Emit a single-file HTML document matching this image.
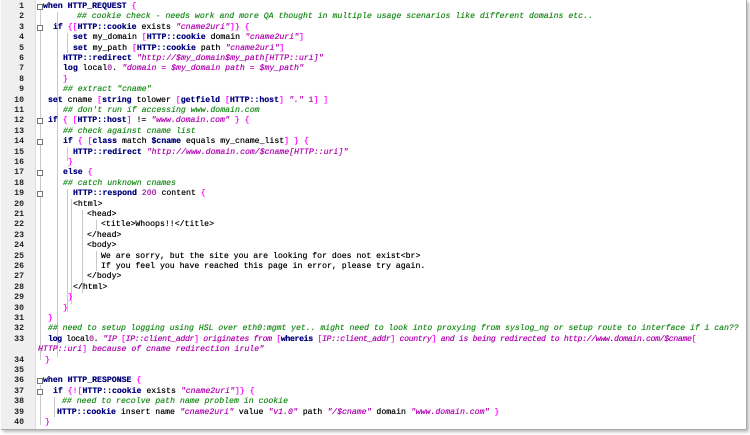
<!DOCTYPE html><html><head><style>
body{margin:0;width:750px;height:435px;background:#fff;overflow:hidden;font-family:"Liberation Mono",monospace;}
#f{position:absolute;left:1px;top:0;width:744px;height:429px;border:1px solid #aaa;border-top:none;box-shadow:2px 2px 3px #bbb;background:#fff}
#g{position:absolute;left:1px;top:0;width:34px;height:429px;background:#efefef;border-right:1px solid #ddd}
.n{position:absolute;width:24px;text-align:right;font-size:8.2px;line-height:10.4px;color:#222;font-weight:bold}
.l{position:absolute;font-size:8.2px;line-height:10.4px;color:#000;white-space:pre;text-shadow:0 0 0.4px currentColor}
.k{color:#00007a;font-weight:bold}.b{color:#f0f}.s{color:#b000b0;font-style:italic}.c{color:#1a8a1a;font-style:italic}.m{color:#a020a0}
.fm{position:absolute;left:37px;width:6px;height:6px;border:1px solid #777;background:#fff;box-sizing:border-box}
.v{position:absolute;width:1px;background:#c8c8c8}
</style></head><body><div id="f"></div><div id="g"></div>
<div class="v" style="left:40px;top:10px;height:350px"></div>
<div class="v" style="left:57px;top:12px;height:345px"></div>
<div class="v" style="left:67px;top:33px;height:20px"></div>
<div class="v" style="left:67px;top:147px;height:14px"></div>
<div class="v" style="left:67px;top:189px;height:123px"></div>
<div class="v" style="left:71px;top:199px;height:105px"></div>
<div class="v" style="left:82px;top:210px;height:83px"></div>
<div class="v" style="left:96px;top:220px;height:10px"></div>
<div class="v" style="left:96px;top:251px;height:20px"></div>
<div class="v" style="left:40px;top:385px;height:40px"></div>
<div class="v" style="left:54px;top:397px;height:20px"></div>
<div class="n" style="top:2px">1</div><div class="n" style="top:12.4px">2</div><div class="n" style="top:22.8px">3</div><div class="n" style="top:33.2px">4</div><div class="n" style="top:43.6px">5</div><div class="n" style="top:54px">6</div><div class="n" style="top:64.4px">7</div><div class="n" style="top:74.8px">8</div><div class="n" style="top:85.2px">9</div><div class="n" style="top:95.6px">10</div><div class="n" style="top:106px">11</div><div class="n" style="top:116.4px">12</div><div class="n" style="top:126.8px">13</div><div class="n" style="top:137.2px">14</div><div class="n" style="top:147.6px">15</div><div class="n" style="top:158px">16</div><div class="n" style="top:168.4px">17</div><div class="n" style="top:178.8px">18</div><div class="n" style="top:189.2px">19</div><div class="n" style="top:199.6px">20</div><div class="n" style="top:210px">21</div><div class="n" style="top:220.4px">22</div><div class="n" style="top:230.8px">23</div><div class="n" style="top:241.2px">24</div><div class="n" style="top:251.6px">25</div><div class="n" style="top:262px">26</div><div class="n" style="top:272.4px">27</div><div class="n" style="top:282.8px">28</div><div class="n" style="top:293.2px">29</div><div class="n" style="top:303.6px">30</div><div class="n" style="top:314px">31</div><div class="n" style="top:324.4px">32</div><div class="n" style="top:334.8px">33</div><div class="n" style="top:355.6px">34</div><div class="n" style="top:366px">35</div><div class="n" style="top:376.4px">36</div><div class="n" style="top:386.8px">37</div><div class="n" style="top:397.2px">38</div><div class="n" style="top:407.6px">39</div><div class="n" style="top:418px">40</div>
<div class="fm" style="top:4px"></div><div class="fm" style="top:25px"></div><div class="fm" style="top:118px"></div><div class="fm" style="top:139px"></div><div class="fm" style="top:170px"></div><div class="fm" style="top:191px"></div><div class="fm" style="top:378px"></div><div class="fm" style="top:389px"></div>
<div class="l" style="top:2px;left:43px"><span class="k">when HTTP_REQUEST</span> <span class="b">{</span></div>
<div class="l" style="top:12.4px;left:77px"><span class="c">## cookie check - needs work and more QA thought in multiple usage scenarios like different domains etc..</span></div>
<div class="l" style="top:22.8px;left:53px"><span class="k">if</span> <span class="b">{[</span><span class="k">HTTP::cookie</span> exists <span class="s">"cname2uri"</span><span class="b">]}</span> <span class="b">{</span></div>
<div class="l" style="top:33.2px;left:73px"><span class="k">set</span> my_domain <span class="b">[</span><span class="k">HTTP::cookie</span> domain <span class="s">"cname2uri"</span><span class="b">]</span></div>
<div class="l" style="top:43.6px;left:73px"><span class="k">set</span> my_path <span class="b">[</span><span class="k">HTTP::cookie</span> path <span class="s">"cname2uri"</span><span class="b">]</span></div>
<div class="l" style="top:54px;left:63px"><span class="k">HTTP::redirect</span> <span class="s">"http://$my_domain$my_path[HTTP::uri]"</span></div>
<div class="l" style="top:64.4px;left:63px"><span class="k">log</span> local<span class="m">0</span>. <span class="s">"domain = $my_domain path = $my_path"</span></div>
<div class="l" style="top:74.8px;left:63px"><span class="b">}</span></div>
<div class="l" style="top:85.2px;left:63px"><span class="c">## extract "cname"</span></div>
<div class="l" style="top:95.6px;left:48px"><span class="k">set</span> cname <span class="b">[</span><span class="k">string</span> tolower <span class="b">[</span><span class="k">getfield</span> <span class="b">[</span><span class="k">HTTP::host</span><span class="b">]</span> <span class="s">"."</span> <span class="m">1</span><span class="b">]</span> <span class="b">]</span></div>
<div class="l" style="top:106px;left:63px"><span class="c">## don't run if accessing www.domain.com</span></div>
<div class="l" style="top:116.4px;left:48px"><span class="k">if</span> <span class="b">{</span> <span class="b">[</span><span class="k">HTTP::host</span><span class="b">]</span> != <span class="s">"www.domain.com"</span> <span class="b">}</span> <span class="b">{</span></div>
<div class="l" style="top:126.8px;left:63px"><span class="c">## check against cname list</span></div>
<div class="l" style="top:137.2px;left:63px"><span class="k">if</span> <span class="b">{</span> <span class="b">[</span><span class="k">class</span> match <span class="k">$cname</span> equals my_cname_list<span class="b">]</span> <span class="b">}</span> <span class="b">{</span></div>
<div class="l" style="top:147.6px;left:73px"><span class="k">HTTP::redirect</span> <span class="s">"http://www.domain.com/$cname[HTTP::uri]"</span></div>
<div class="l" style="top:158px;left:68px"><span class="b">}</span></div>
<div class="l" style="top:168.4px;left:63px"><span class="k">else</span> <span class="b">{</span></div>
<div class="l" style="top:178.8px;left:63px"><span class="c">## catch unknown cnames</span></div>
<div class="l" style="top:189.2px;left:73px"><span class="k">HTTP::respond</span> <span class="m">200</span> content <span class="b">{</span></div>
<div class="l" style="top:199.6px;left:73px">&lt;html&gt;</div>
<div class="l" style="top:210px;left:87px">&lt;head&gt;</div>
<div class="l" style="top:220.4px;left:101px">&lt;title&gt;Whoops!!&lt;/title&gt;</div>
<div class="l" style="top:230.8px;left:87px">&lt;/head&gt;</div>
<div class="l" style="top:241.2px;left:87px">&lt;body&gt;</div>
<div class="l" style="top:251.6px;left:101px">We are sorry, but the site you are looking for does not exist&lt;br&gt;</div>
<div class="l" style="top:262px;left:101px">If you feel you have reached this page in error, please try again.</div>
<div class="l" style="top:272.4px;left:87px">&lt;/body&gt;</div>
<div class="l" style="top:282.8px;left:73px">&lt;/html&gt;</div>
<div class="l" style="top:293.2px;left:68px"><span class="b">}</span></div>
<div class="l" style="top:303.6px;left:63px"><span class="b">}</span></div>
<div class="l" style="top:314px;left:48px"><span class="b">}</span></div>
<div class="l" style="top:324.4px;left:48px;letter-spacing:-0.05px"><span class="c">## need to setup logging using HSL over eth0:mgmt yet.. might need to look into proxying from syslog_ng or setup route to interface if i can??</span></div>
<div class="l" style="top:334.8px;left:48px;letter-spacing:-0.35px"><span class="k">log</span> local<span class="m">0</span>. <span class="s">"IP </span><span class="b">[</span><span class="s">IP::client_addr</span><span class="b">]</span><span class="s"> originates from </span><span class="b">[</span><span class="k">whereis</span> <span class="b">[</span><span class="s">IP::client_addr</span><span class="b">]</span><span class="s"> country</span><span class="b">]</span><span class="s"> and is being redirected to http://www.domain.com/$cname</span><span class="b">[</span></div>
<div class="l" style="top:345.2px;left:38px"><span class="s">HTTP::uri</span><span class="b">]</span><span class="s"> because of cname redirection irule"</span></div>
<div class="l" style="top:355.6px;left:45px"><span class="b">}</span></div>
<div class="l" style="top:376.4px;left:43px"><span class="k">when HTTP_RESPONSE</span> <span class="b">{</span></div>
<div class="l" style="top:386.8px;left:53px"><span class="k">if</span> <span class="b">{![</span><span class="k">HTTP::cookie</span> exists <span class="s">"cname2uri"</span><span class="b">]}</span> <span class="b">{</span></div>
<div class="l" style="top:397.2px;left:62px"><span class="c">## need to recolve path name problem in cookie</span></div>
<div class="l" style="top:407.6px;left:57px"><span class="k">HTTP::cookie</span> insert name <span class="s">"cname2uri"</span> value <span class="s">"v1.0"</span> path <span class="s">"/$cname"</span> domain <span class="s">"www.domain.com"</span> <span class="b">}</span></div>
<div class="l" style="top:418px;left:45px"><span class="b">}</span></div>
</body></html>
